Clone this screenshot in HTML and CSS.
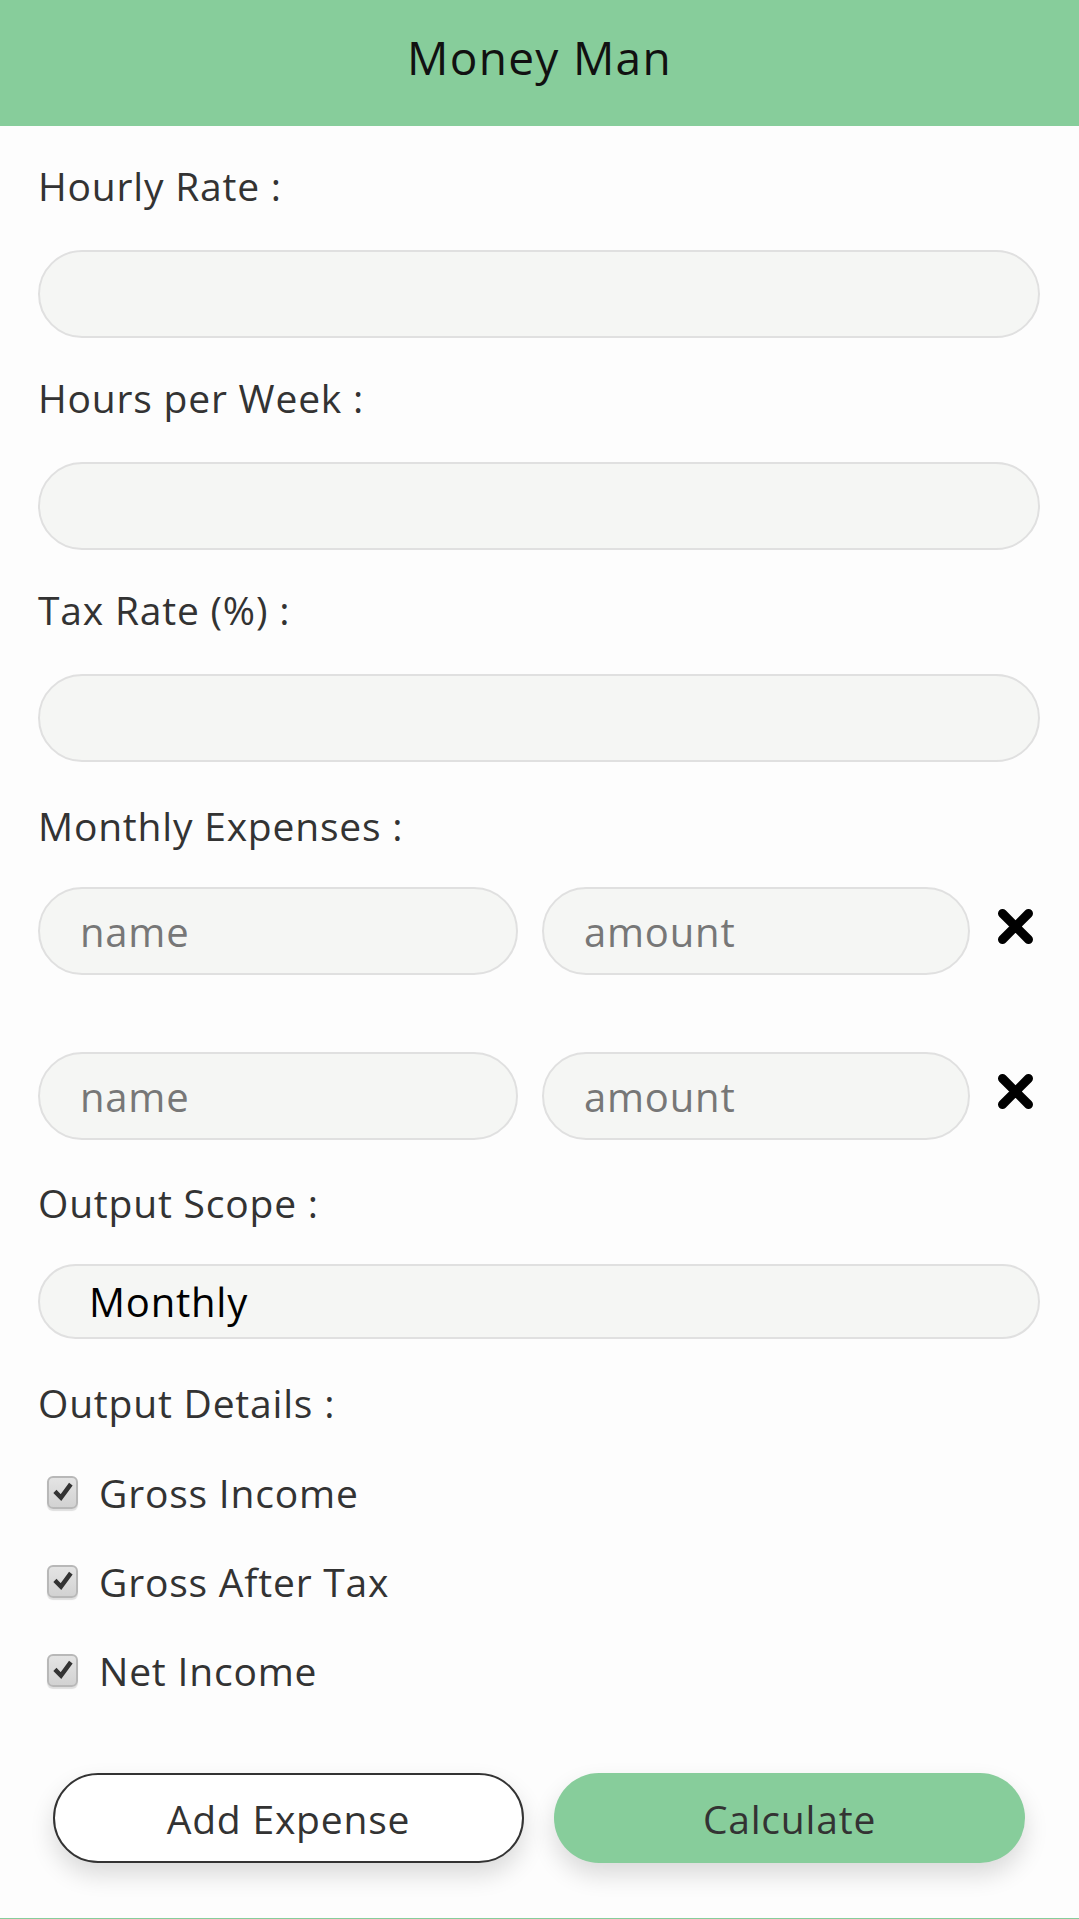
FILE: index.html
```html
<!DOCTYPE html>
<html lang="en">
<head>
<meta charset="utf-8">
<title>Money Man</title>
<link rel="stylesheet" href="styles.css">
</head>
<body>
<header class="topbar">
  <h1 class="title">Money Man</h1>
</header>
<main class="form">
  <label class="label">Hourly Rate :</label>
  <input class="field" type="text">
  <label class="label">Hours per Week :</label>
  <input class="field" type="text">
  <label class="label">Tax Rate (%) :</label>
  <input class="field" type="text">
  <label class="label label-exp">Monthly Expenses :</label>
  <div class="expenses">
    <div class="exp-row">
      <input class="field field-name" type="text" placeholder="name">
      <input class="field field-amount" type="text" placeholder="amount">
      <span class="remove"><svg viewBox="0 0 37 37" width="37" height="37"><path d="M5.5 5.5 L31.5 31.5 M31.5 5.5 L5.5 31.5" stroke="#000" stroke-width="9" stroke-linecap="round" fill="none"/></svg></span>
    </div>
    <div class="exp-row">
      <input class="field field-name" type="text" placeholder="name">
      <input class="field field-amount" type="text" placeholder="amount">
      <span class="remove"><svg viewBox="0 0 37 37" width="37" height="37"><path d="M5.5 5.5 L31.5 31.5 M31.5 5.5 L5.5 31.5" stroke="#000" stroke-width="9" stroke-linecap="round" fill="none"/></svg></span>
    </div>
  </div>
  <label class="label label-scope">Output Scope :</label>
  <div class="select">Monthly</div>
  <label class="label label-details">Output Details :</label>
  <div class="checks">
    <div class="check"><span class="box"><svg viewBox="0 0 20 20" width="20" height="20"><path d="M3.5 11 L8 15.5 L16.5 4" stroke="#333" stroke-width="4.5" stroke-linecap="square" stroke-linejoin="miter" fill="none"/></svg></span><span class="check-text">Gross Income</span></div>
    <div class="check"><span class="box"><svg viewBox="0 0 20 20" width="20" height="20"><path d="M3.5 11 L8 15.5 L16.5 4" stroke="#333" stroke-width="4.5" stroke-linecap="square" stroke-linejoin="miter" fill="none"/></svg></span><span class="check-text">Gross After Tax</span></div>
    <div class="check"><span class="box"><svg viewBox="0 0 20 20" width="20" height="20"><path d="M3.5 11 L8 15.5 L16.5 4" stroke="#333" stroke-width="4.5" stroke-linecap="square" stroke-linejoin="miter" fill="none"/></svg></span><span class="check-text">Net Income</span></div>
  </div>
  <div class="actions">
    <button class="btn btn-outline" type="button">Add Expense</button>
    <button class="btn btn-green" type="button">Calculate</button>
  </div>
</main>
<footer class="footbar"></footer>
</body>
</html>
```
FILE: styles.css
```css
* { box-sizing: border-box; }
html, body {
  margin: 0;
  padding: 0;
  background: #fdfdfd;
  font-family: "Open Sans", "Noto Sans", sans-serif;
  color: #333;
  overflow: hidden;
}
.topbar {
  height: 126px;
  background: #87cd9b;
  display: flex;
  align-items: center;
  justify-content: center;
}
.title {
  margin: 0;
  font-weight: 400;
  font-size: 46px;
  letter-spacing: 1.3px;
  color: #111;
  padding-bottom: 12px;
}
.form {
  padding: 0 39px 0 38px;
  display: flex;
  flex-direction: column;
}
.label {
  display: block;
  font-size: 39px;
  letter-spacing: 0.8px;
  line-height: 46px;
  height: 46px;
  margin: 37px 0 41px 0;
  color: #333;
}
.label-exp { margin-top: 41px; margin-bottom: 38px; }
.label-scope { margin-top: 40px; margin-bottom: 38px; }
.label-details { margin-top: 41px; margin-bottom: 40px; }
.field {
  display: block;
  width: 100%;
  height: 88px;
  border: 2px solid #e0e0e0;
  background: #f5f6f4;
  border-radius: 44px;
  padding: 0 40px;
  font-family: inherit;
  font-size: 40px;
  letter-spacing: 0.8px;
  color: #333;
  outline: none;
}
.field::placeholder { color: #777; }
.expenses {
  display: flex;
  flex-direction: column;
  gap: 77px;
}
.exp-row {
  display: flex;
  align-items: center;
}
.field-name { width: 480px; flex: none; }
.field-amount { width: 428px; flex: none; margin-left: 24px; }
.remove {
  display: flex;
  width: 37px;
  height: 37px;
  margin-left: 27px;
  margin-top: -10px;
}
.select {
  height: 75px;
  border: 2px solid #e0e0e0;
  background: #f5f6f4;
  border-radius: 38px;
  padding: 0 0 0 49px;
  display: flex;
  align-items: center;
  font-size: 40px;
  letter-spacing: 0.8px;
  color: #000;
}
.checks {
  display: flex;
  flex-direction: column;
  gap: 43px;
  margin-top: 3px;
}
.check {
  display: flex;
  align-items: center;
  height: 46px;
}
.box {
  width: 31px;
  height: 33px;
  margin-left: 9px;
  border: 2px solid #b8b8b8;
  border-radius: 6px;
  background: linear-gradient(#e4e4e4, #d2d2d2);
  box-shadow: 0 2px 1px rgba(0,0,0,0.12);
  display: flex;
  align-items: center;
  justify-content: center;
}
.check-text {
  margin-left: 21px;
  font-size: 39px;
  letter-spacing: 0.8px;
  color: #333;
}
.actions {
  display: flex;
  justify-content: center;
  gap: 30px;
  margin-top: 80px;
}
.btn {
  width: 471px;
  height: 90px;
  border-radius: 45px;
  font-family: inherit;
  font-size: 39px;
  letter-spacing: 0.8px;
  color: #333;
  box-shadow: 0 12px 24px rgba(0,0,0,0.14);
  cursor: pointer;
}
.btn-outline {
  background: #fff;
  border: 2.5px solid #333;
}
.btn-green {
  background: #87cd9b;
  border: none;
}
.footbar {
  margin-top: 55px;
  height: 40px;
  background: #87cd9b;
}
```
